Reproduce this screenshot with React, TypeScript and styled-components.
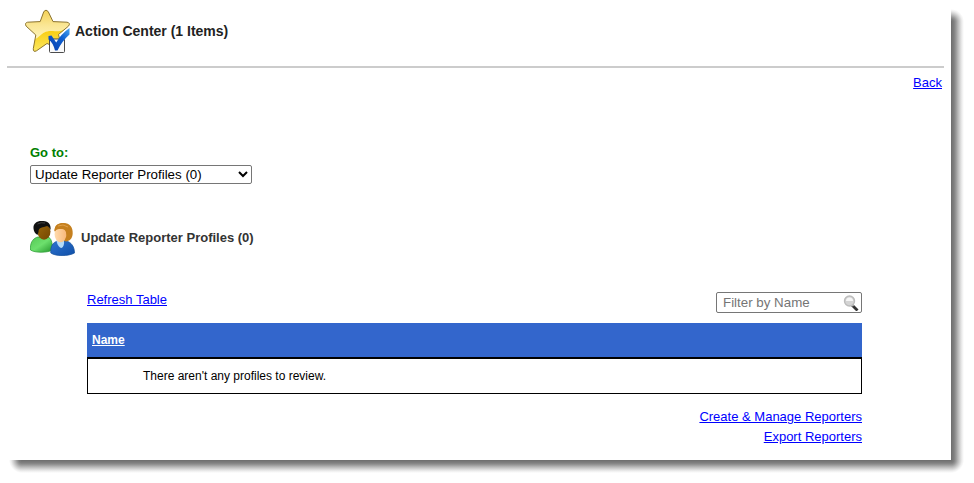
import React, { useState } from "react";
import styled, { createGlobalStyle } from "styled-components";

const SHADOW =
  "#6c6c6c 0, #747474 1px, #808080 3px, #999 5px, #b8b8b8 7px, #d4d4d4 9px, #eee 11px, #fff 13px";

const GlobalStyle = createGlobalStyle`
  * { box-sizing: border-box; }
  body {
    margin: 0;
    background: #fff;
    color: #000;
    font: 13px/20px "Liberation Sans", Arial, sans-serif;
  }
`;

const Frame = styled.div`
  display: grid;
  grid-template-columns: 1fr 13px;
  padding: 0 10px 10px 0;
`;

const ShadowRight = styled.div`
  display: flex;
  flex-direction: column;
  padding-top: 9px;
`;

const ShadowBottom = styled.div`
  display: flex;
  height: 13px;
  padding-left: 9px;
`;

const ShadowEdge = styled.div<{ $side: "right" | "bottom" }>`
  flex: 1;
  background: linear-gradient(to ${(p) => p.$side}, ${SHADOW});
`;

const ShadowCorner = styled.div<{ $from: string }>`
  flex: none;
  width: 13px;
  height: 13px;
  background: radial-gradient(circle at ${(p) => p.$from}, ${SHADOW});
`;

const Panel = styled.div`
  min-width: 0;
  padding-bottom: 13px;
`;

const Header = styled.header`
  display: flex;
  align-items: flex-start;
  gap: 4px;
  margin: 0 7px;
  padding: 9px 0 11px 18px;
  border-bottom: 2px solid #ccc;
`;

const Title = styled.h1`
  margin: 12px 0 0;
  font-size: 14px;
  line-height: 20px;
  color: #222;
`;

const Link = styled.a`
  color: #00f;
  text-decoration: underline;
`;

const BackBar = styled.nav`
  display: flex;
  justify-content: flex-end;
  padding: 5px 9px 0 0;
`;

const Goto = styled.div`
  display: flex;
  flex-direction: column;
  align-items: flex-start;
  gap: 2px;
  padding: 50px 30px 0;
`;

const GotoLabel = styled.label`
  font-weight: bold;
  color: green;
`;

const GotoSelect = styled.select`
  width: 222px;
  height: 19px;
  padding: 0;
  border: 1px solid #767676;
  border-radius: 2px;
  background: #fff;
  color: #000;
  font-family: inherit;
`;

const Section = styled.div`
  display: flex;
  align-items: center;
  gap: 6px;
  padding: 36px 30px 0;
`;

const SectionTitle = styled.h2`
  margin: 0;
  font-size: 13px;
  line-height: 20px;
  color: #333;
`;

const Content = styled.main`
  margin: 36px 89px 0 87px;
`;

const Tools = styled.div`
  display: flex;
  justify-content: space-between;
  align-items: flex-start;
  padding-bottom: 10px;
`;

const RefreshLink = styled(Link)`
  margin-top: -2px;
`;

const Filter = styled.div`
  display: flex;
  align-items: center;
  width: 146px;
  height: 21px;
  padding: 0 2px 0 6px;
  border: 1px solid #767676;
  border-radius: 2px;
`;

const FilterInput = styled.input`
  flex: 1;
  min-width: 0;
  padding: 0;
  border: 0;
  outline: 0;
  background: none;
  font-family: inherit;
  &::placeholder { color: #757575; }
`;

const Table = styled.table`
  width: 100%;
  border-collapse: separate;
  border-spacing: 0;
  font-size: 12px;
  line-height: 16px;
`;

const HeadCell = styled.th`
  height: 34px;
  padding: 0 5px;
  background: #36c;
  text-align: left;
`;

const SortLink = styled.a`
  color: #fff;
`;

const Cell = styled.td`
  height: 37px;
  padding: 0 56px 0 55px;
  border: 1px solid #000;
  border-top-width: 2px;
`;

const Actions = styled.div`
  display: flex;
  flex-direction: column;
  align-items: flex-end;
  padding-top: 13px;
`;

const STAR =
  "M18.8 2.6Q21 -.4 23.2 2.6L28 12.6 42 13.2Q46 14 43.4 17.2L33.5 25.5 37.5 41 22 34.5 11.5 41.8Q8 43.6 8.3 39.6L10.8 26 1.2 17.2Q-.8 14 2.6 13.2L15.2 12.6Z";

function StarIcon() {
  return (
    <svg width="46" height="46" viewBox="0 0 46 46" aria-hidden="true">
      <defs>
        <linearGradient id="star" x1="0" y1="0" x2="0" y2="1">
          <stop offset="0" stopColor="#f3cf50" />
          <stop offset=".35" stopColor="#fae694" />
          <stop offset=".6" stopColor="#fdf2b4" />
          <stop offset="1" stopColor="#fbe78a" />
        </linearGradient>
        <linearGradient id="starLow" x1="0" y1="0" x2="0" y2="1">
          <stop offset="0" stopColor="#f7c800" />
          <stop offset="1" stopColor="#fcec70" />
        </linearGradient>
        <linearGradient id="check" x1="0" y1="1" x2="1" y2="0">
          <stop offset="0" stopColor="#0a3fae" />
          <stop offset=".6" stopColor="#0e5fd0" />
          <stop offset="1" stopColor="#4aa5f2" />
        </linearGradient>
        <clipPath id="starShape">
          <path d={STAR} />
        </clipPath>
      </defs>
      <g clipPath="url(#starShape)">
        <path d="M0 0h46v46H0z" fill="url(#star)" />
        <path d="M4 32C15 31 15 22 26 22c8 0 9 2 19-5v29H4z" fill="url(#starLow)" />
      </g>
      <path d={STAR} fill="none" stroke="#8c7430" strokeLinejoin="round" />
      <rect x="24.5" y="30" width="15" height="13.5" rx="1" fill="#fafafa" stroke="#4c4c4c" />
      <path d="M23.5 27 26.5 26.5 31.2 33.5Q36 25 44.5 19V25.5Q37 32 32.5 41.5H30Q28 33.5 23.5 30.5Z" fill="url(#check)" />
    </svg>
  );
}

function PeopleIcon() {
  return (
    <svg width="45" height="36" viewBox="0 0 45 36" aria-hidden="true">
      <defs>
        <linearGradient id="green" x1="0" y1="0" x2="1" y2="1">
          <stop offset="0" stopColor="#55c855" />
          <stop offset=".5" stopColor="#6de06d" />
          <stop offset="1" stopColor="#23952b" />
        </linearGradient>
        <linearGradient id="blue" x1="0" y1="0" x2="1" y2="1">
          <stop offset="0" stopColor="#2f74d0" />
          <stop offset="1" stopColor="#0f4fa8" />
        </linearGradient>
        <linearGradient id="skin" x1="0" y1="0" x2="1" y2="0">
          <stop offset="0" stopColor="#ffdcae" />
          <stop offset="1" stopColor="#f9b87a" />
        </linearGradient>
        <linearGradient id="brown" x1="0" y1="0" x2="1" y2="1">
          <stop offset="0" stopColor="#9c680c" />
          <stop offset="1" stopColor="#734600" />
        </linearGradient>
      </defs>
      <path d="M.4 28C.4 22 3.5 18 8 17h10C21 18 22.5 22 22.5 30 17 33 5 33 .5 30Z" fill="url(#green)" stroke="#259a2e" strokeWidth=".7" />
      <ellipse cx="14" cy="11.5" rx="6.5" ry="8.3" fill="url(#brown)" />
      <path d="M3.5 8.5C3 3.5 7 .8 12 1 18 .3 21.2 4 20.6 10 19.5 7.5 18.5 6.5 17 6 13 8 8.5 6.5 8.5 12L7.5 15C5 13.5 3.6 11 3.5 8.5Z" fill="#111" />
      <path d="M7.5 4Q11 2 15 3" fill="none" stroke="#444" />
      <path d="M20.8 33C20.3 26 23 22 28 21h8C41.5 22 44.5 27 44.5 33 38 36.5 26 36.5 20.8 33Z" fill="url(#blue)" stroke="#16509c" strokeWidth=".7" />
      <path d="M26.5 20.5H34C34.5 24 33.5 27 31.5 28 29 27.5 27 24.5 26.5 20.5Z" fill="#b5daf6" />
      <path d="M24.5 11C24.5 5 28 3 33.5 3 40 3 43 7.5 42.7 13.5 42.5 19 39 22 34.5 21.3L30 14Z" fill="#c5801f" />
      <ellipse cx="30.5" cy="14.5" rx="5.9" ry="7.8" fill="url(#skin)" />
      <path d="M24.5 11.5C24.5 5.5 28 3.2 33.5 3.3 39 4 41 7 40.5 12L36.5 15C36.3 10.5 34.5 9 31 9 28 9 26 9.2 24.5 11.5Z" fill="#c5801f" />
      <path d="M28 6Q33 3.5 38 7" fill="none" stroke="#e0a048" />
    </svg>
  );
}

function SearchIcon() {
  return (
    <svg width="16" height="16" viewBox="0 0 16 16" aria-hidden="true">
      <path d="M9 10 14.5 15.5" stroke="#333" strokeWidth="2.8" />
      <path d="M8.5 9 10.5 11" stroke="#aaa" strokeWidth="2" />
      <circle cx="6.5" cy="6" r="5" fill="#d4d4d4" stroke="#bcbcbc" strokeWidth="1.4" />
      <path d="M3 6A3.5 3.5 0 0 1 10 6Z" fill="#f6f6f6" />
    </svg>
  );
}

export default function App() {
  const [filter, setFilter] = useState("");
  return (
    <>
      <GlobalStyle />
      <Frame>
        <Panel>
          <Header>
            <StarIcon />
            <Title>Action Center (1 Items)</Title>
          </Header>
          <BackBar>
            <Link href="#back">Back</Link>
          </BackBar>
          <Goto>
            <GotoLabel htmlFor="goto">Go to:</GotoLabel>
            <GotoSelect id="goto">
              <option>Update Reporter Profiles (0)</option>
            </GotoSelect>
          </Goto>
          <Section>
            <PeopleIcon />
            <SectionTitle>Update Reporter Profiles (0)</SectionTitle>
          </Section>
          <Content>
            <Tools>
              <RefreshLink href="#refresh">Refresh Table</RefreshLink>
              <Filter>
                <FilterInput
                  type="text"
                  aria-label="Filter by Name"
                  placeholder="Filter by Name"
                  value={filter}
                  onChange={(e) => setFilter(e.target.value)}
                />
                <SearchIcon />
              </Filter>
            </Tools>
            <Table>
              <thead>
                <tr>
                  <HeadCell scope="col">
                    <SortLink href="#sort-name">Name</SortLink>
                  </HeadCell>
                </tr>
              </thead>
              <tbody>
                <tr>
                  <Cell>There aren't any profiles to review.</Cell>
                </tr>
              </tbody>
            </Table>
            <Actions>
              <Link href="#reporters">Create &amp; Manage Reporters</Link>
              <Link href="#export">Export Reporters</Link>
            </Actions>
          </Content>
        </Panel>
        <ShadowRight>
          <ShadowCorner $from="bottom left" />
          <ShadowEdge $side="right" />
        </ShadowRight>
        <ShadowBottom>
          <ShadowCorner $from="top right" />
          <ShadowEdge $side="bottom" />
        </ShadowBottom>
        <ShadowCorner $from="top left" />
      </Frame>
    </>
  );
}
